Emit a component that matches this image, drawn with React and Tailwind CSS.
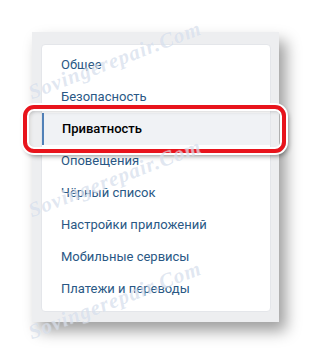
const items = [
  "Общее",
  "Безопасность",
  "Приватность",
  "Оповещения",
  "Чёрный список",
  "Настройки приложений",
  "Мобильные сервисы",
  "Платежи и переводы",
];

const Watermark = ({ top }) => (
  <div
    className="absolute left-[20px] w-[190px] text-center text-[21px] font-bold italic leading-none tracking-[1px] text-[#bccae0]/45 rotate-[-21deg] origin-center pointer-events-none"
    style={{ top, fontFamily: '"Liberation Serif", serif', textShadow: "0 0 1px rgba(255,255,255,0.6)" }}
  >
    Sovingerepair.Com
  </div>
);

export default function App() {
  return (
    <div
      className="relative w-[311px] h-[355px] bg-white pt-[32px] pl-[32px] overflow-hidden"
      style={{ fontFamily: "Roboto, Arial, sans-serif" }}
    >
      {/* Outer grey panel */}
      <div className="w-[247px] h-[290px] bg-[#edeef0] pt-[12px] pl-[9px] shadow-[7px_9px_14px_rgba(0,0,0,0.38)]">
        {/* Menu card */}
        <div className="w-[230px] h-[268px] bg-white rounded-[4px] border border-[#e4e6ea] pt-[4px]">
          {items.map((label, i) =>
            i === 2 ? (
              <div
                key={label}
                className="h-[32px] flex items-center pl-[18px] bg-[#f0f2f5] border-l-2 border-[#5181b8] text-[13px] font-medium text-black"
              >
                {label}
              </div>
            ) : (
              <div
                key={label}
                className="h-[32px] flex items-center pl-[19px] text-[13px] text-[#2a5885]"
              >
                {label}
              </div>
            )
          )}
        </div>
      </div>

      {/* Red highlight frame */}
      <div className="absolute left-[23px] top-[105px] w-[263px] h-[48px] rounded-[11px] border-[4px] border-[#e8141c] ring-2 ring-white shadow-[2px_3px_5px_rgba(0,0,0,0.45),inset_0_0_0_2px_#fff,inset_2px_2px_4px_rgba(0,0,0,0.25)]" />

      <Watermark top="50px" />
      <Watermark top="168px" />
      <Watermark top="290px" />
    </div>
  );
}
